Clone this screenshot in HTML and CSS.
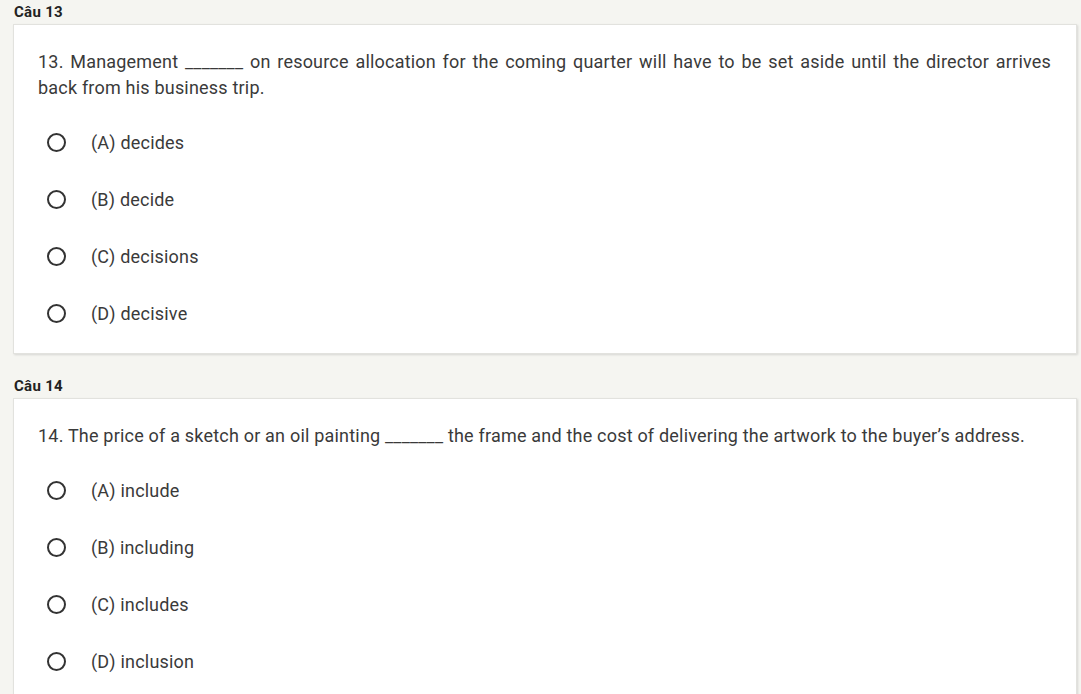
FILE: index.html
```html
<!DOCTYPE html>
<html>
<head>
<meta charset="utf-8">
<link rel="stylesheet" href="styles.css">
</head>
<body>
<div class="page">
  <section class="q">
    <h3 class="q-title">Câu 13</h3>
    <div class="card">
      <p class="q-text">13. Management _______ on resource allocation for the coming quarter will have to be set aside until the director arrives back from his business trip.</p>
      <ul class="opts">
        <li class="opt"><span class="radio"></span><span class="label">(A) decides</span></li>
        <li class="opt"><span class="radio"></span><span class="label">(B) decide</span></li>
        <li class="opt"><span class="radio"></span><span class="label">(C) decisions</span></li>
        <li class="opt"><span class="radio"></span><span class="label">(D) decisive</span></li>
      </ul>
    </div>
  </section>
  <section class="q">
    <h3 class="q-title">Câu 14</h3>
    <div class="card">
      <p class="q-text">14. The price of a sketch or an oil painting _______ the frame and the cost of delivering the artwork to the buyer’s address.</p>
      <ul class="opts">
        <li class="opt"><span class="radio"></span><span class="label">(A) include</span></li>
        <li class="opt"><span class="radio"></span><span class="label">(B) including</span></li>
        <li class="opt"><span class="radio"></span><span class="label">(C) includes</span></li>
        <li class="opt"><span class="radio"></span><span class="label">(D) inclusion</span></li>
      </ul>
    </div>
  </section>
</div>
</body>
</html>
```

FILE: styles.css
```css
html, body {
  margin: 0;
  padding: 0;
  background: #f5f5f1;
  font-family: Roboto, "Noto Sans", sans-serif;
  color: #333;
}

.page {
  padding: 0 4px 0 13px;
}

.q + .q {
  margin-top: 20px;
}

.q-title {
  margin: 0;
  padding-left: 1px;
  font-size: 15px;
  font-weight: 700;
  line-height: 24px;
  letter-spacing: 0.3px;
  color: #222;
}

.card {
  background: #fff;
  border: 1px solid #e2e2de;
  box-shadow: 1px 1px 2px rgba(0, 0, 0, 0.12);
  padding: 24px 25px 11px 24px;
}

.q-text {
  margin: 0;
  font-size: 18px;
  line-height: 26px;
  letter-spacing: 0.2px;
  text-align: justify;
  color: #3a3a3a;
}

.opts {
  list-style: none;
  margin: 13px 0 0;
  padding: 0;
}

.opt {
  display: flex;
  align-items: center;
  height: 57px;
}

.radio {
  box-sizing: border-box;
  width: 19px;
  height: 19px;
  border: 2px solid #333;
  border-radius: 50%;
  margin-left: 9px;
  flex: none;
}

.label {
  margin-left: 25px;
  font-size: 18px;
  letter-spacing: 0.2px;
  color: #3a3a3a;
}
```
